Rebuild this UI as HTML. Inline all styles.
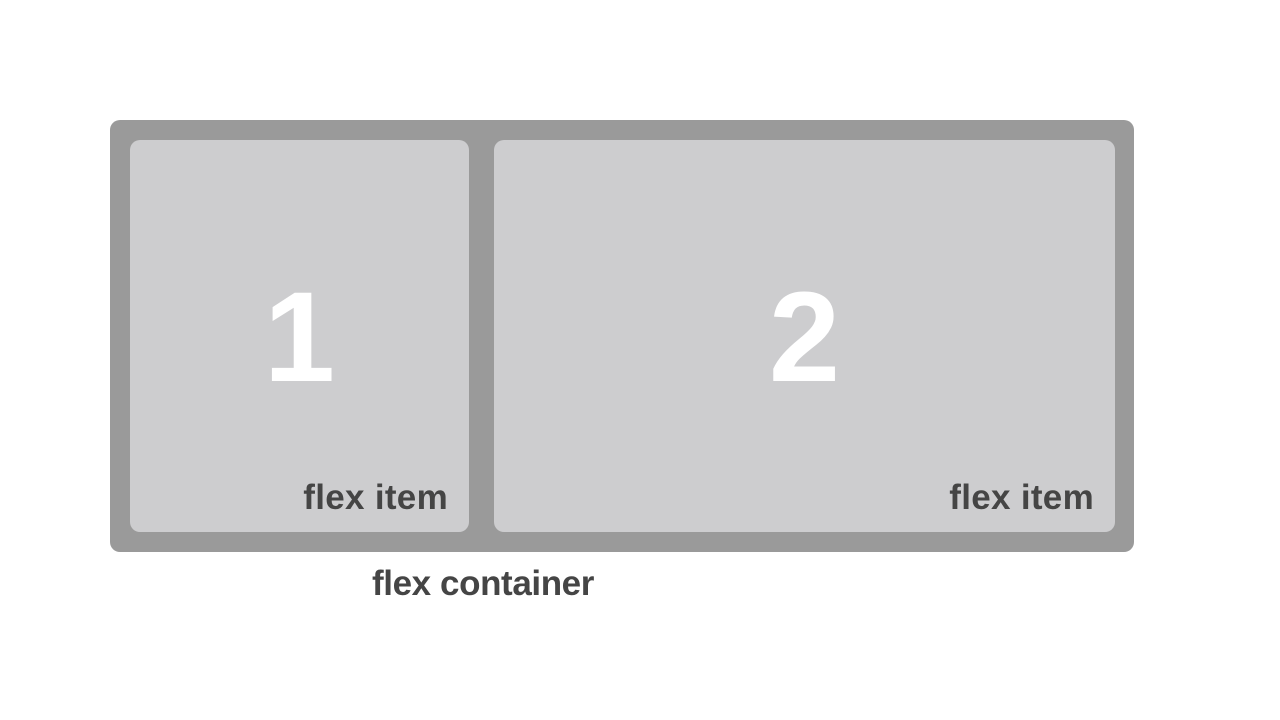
<!DOCTYPE html>
<html><head><style>
body{margin:0;width:1280px;height:720px;background:#fff;position:relative;font-family:"Liberation Sans",sans-serif;overflow:hidden}
.c{position:absolute;left:110px;top:120px;width:1024px;height:432px;background:#9a9a9a;border-radius:10px}
.i{position:absolute;top:140px;height:392px;background:#cdcdcf;border-radius:10px}
.n{position:absolute;left:0;right:0;text-align:center;color:#fff;font-weight:bold;font-size:128px;line-height:128px}
.l{position:absolute;right:22px;color:#454545;font-weight:bold;font-size:35px;line-height:40px;letter-spacing:0.3px}
.fc{position:absolute;left:372px;top:564px;color:#454545;font-weight:bold;font-size:35px;line-height:40px;letter-spacing:-0.4px}
</style></head><body>
<div class="c"></div>
<div class="i" style="left:130px;width:339px"><div class="n" style="top:134px">1</div><div class="l" style="top:338px;right:21px">flex item</div></div>
<div class="i" style="left:494px;width:621px"><div class="n" style="top:134px">2</div><div class="l" style="top:338px;right:21px">flex item</div></div>
<div class="fc">flex container</div>
</body></html>
